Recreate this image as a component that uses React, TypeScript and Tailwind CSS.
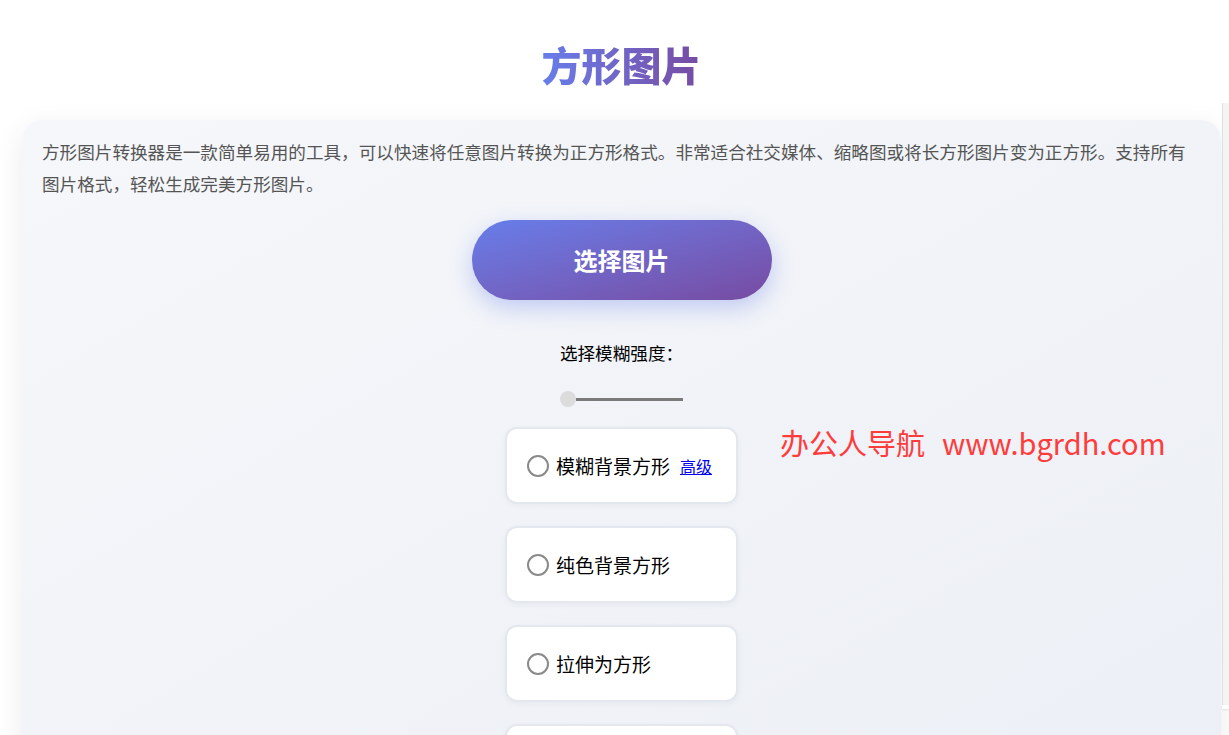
import React from "react";

const options = [
  { label: "模糊背景方形", extra: true },
  { label: "纯色背景方形", extra: false },
  { label: "拉伸为方形", extra: false },
  { label: "裁剪为方形", extra: false },
];

export default function App() {
  return (
    <div
      className="relative min-h-[735px] w-full overflow-hidden bg-white"
      style={{ fontFamily: '"Noto Sans CJK SC", "Noto Sans", sans-serif' }}
    >
      <div className="ml-[22px] w-[1199px]">
        <h1 className="pt-[35px] pb-[27px] text-center text-[40px] font-extrabold leading-[58px]">
          <span className="bg-gradient-to-r from-[#667eea] to-[#764ba2] bg-clip-text text-transparent">
            方形图片
          </span>
        </h1>
        <div className="h-[700px] rounded-[20px] bg-gradient-to-br from-[#f5f7fa] to-[#eceff5] px-[20px] pt-[16px] shadow-[0_8px_30px_rgba(0,0,0,0.08)]">
          <p className="text-[17.6px] leading-[32px] text-[#555]">
            方形图片转换器是一款简单易用的工具，可以快速将任意图片转换为正方形格式。非常适合社交媒体、缩略图或将长方形图片变为正方形。支持所有图片格式，轻松生成完美方形图片。
          </p>
          <div className="mt-[20px] flex flex-col items-center">
            <button className="flex h-[80px] w-[300px] items-center justify-center rounded-full bg-gradient-to-br from-[#667eea] to-[#764ba2] text-[24px] font-bold text-white shadow-[0_8px_22px_rgba(102,126,234,0.35)]">
              选择图片
            </button>
            <div className="mt-[39px] text-[17.6px] leading-[28px] text-black">选择模糊强度：</div>
            <div className="mt-[24px] flex h-[16px] w-[123px] items-center">
              <div className="h-[16px] w-[16px] shrink-0 rounded-full bg-[#dcdcdc]" />
              <div className="h-[3px] flex-1 bg-[#7a7a7a]" />
            </div>
            <div className="mt-[20px] flex flex-col gap-[22px]">
              {options.map((o) => (
                <div
                  key={o.label}
                  className="flex h-[77px] w-[233px] items-center rounded-[12px] border-2 border-[#e3e7ee] bg-white px-[20px] shadow-[0_2px_6px_rgba(0,0,0,0.04)]"
                >
                  <span className="h-[22px] w-[22px] shrink-0 rounded-full border-2 border-[#8a8a8a] bg-white" />
                  <span className="ml-[7px] text-[19px] leading-[28px] text-black">{o.label}</span>
                  {o.extra && (
                    <span className="ml-[10px] text-[16px] text-[#0000ee] underline">高级</span>
                  )}
                </div>
              ))}
            </div>
          </div>
        </div>
      </div>

      <div className="pointer-events-none absolute left-[780px] top-[422px] whitespace-nowrap text-[29px] leading-[40px] text-[#ff3c3c]">
        办公人导航<span className="ml-[17px]">www.bgrdh.com</span>
      </div>

      <div className="absolute left-[1222px] top-[103px] h-[602px] w-[7px] border-l border-[#dedede] bg-[#f4f4f4]" />
      <div className="absolute left-[1222px] top-[705px] h-[4px] w-[7px] bg-white shadow-[0_1px_2px_rgba(0,0,0,0.1)]" />
    </div>
  );
}
